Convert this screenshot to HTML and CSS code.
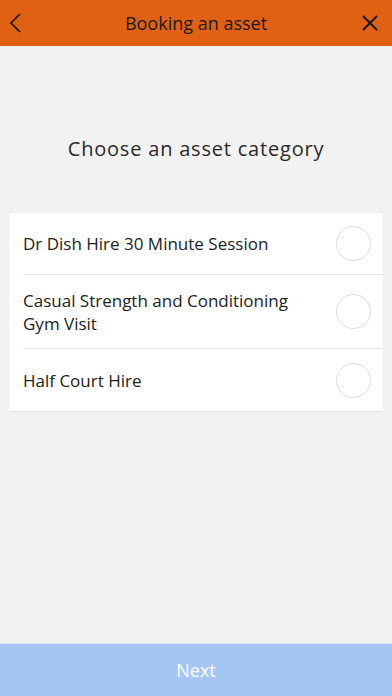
FILE: index.html
```html
<!DOCTYPE html>
<html lang="en">
<head>
    <meta charset="UTF-8">
    <meta name="viewport" content="width=device-width, initial-scale=1.0">
    <title>Booking an asset</title>
    <link rel="stylesheet" href="styles.css">
</head>
<body>
    <header class="top-bar">
        <span class="icon-btn">
            <svg width="14" height="22" viewBox="0 0 14 22"><path d="M11 2 L2 11 L11 20" fill="none" stroke="#1a1a1a" stroke-width="1.7"/></svg>
        </span>
        <h1>Booking an asset</h1>
        <span class="icon-btn">
            <svg width="16" height="16" viewBox="0 0 16 16"><path d="M1 1 L15 15 M15 1 L1 15" fill="none" stroke="#1a1a1a" stroke-width="2"/></svg>
        </span>
    </header>

    <main>
        <h2>Choose an asset category</h2>
        <ul class="category-list">
            <li class="category"><span>Dr Dish Hire 30 Minute Session</span><span class="radio"></span></li>
            <li class="category tall"><span>Casual Strength and Conditioning Gym Visit</span><span class="radio"></span></li>
            <li class="category"><span>Half Court Hire</span><span class="radio"></span></li>
        </ul>
    </main>

    <footer class="next-btn">Next</footer>
</body>
</html>
```

FILE: styles.css
```css
* {
    margin: 0;
    padding: 0;
    box-sizing: border-box;
}

body {
    font-family: 'Open Sans', 'Noto Sans', sans-serif;
    background: #f2f2f2;
    color: #222;
    height: 696px;
    display: flex;
    flex-direction: column;
}

/* Header */
.top-bar {
    height: 46px;
    background: #e06014;
    display: flex;
    align-items: center;
    justify-content: space-between;
    padding: 0 14px 0 8px;
}

.top-bar h1 {
    font-size: 18px;
    font-weight: 400;
    color: #1a1a1a;
    margin-left: 6px;
}

.icon-btn {
    width: 16px;
    display: flex;
    align-items: center;
    justify-content: center;
}

/* Content */
main {
    flex: 1;
    padding: 0 9px;
}

main h2 {
    text-align: center;
    font-size: 20px;
    font-weight: 400;
    letter-spacing: 0.8px;
    color: #2a2a2a;
    margin: 88px 0 49px;
    line-height: 30px;
}

.category-list {
    list-style: none;
    background: #fff;
    padding-left: 14px;
    box-shadow: 0 1px 1px rgba(0, 0, 0, 0.06);
}

.category {
    display: flex;
    align-items: center;
    justify-content: space-between;
    min-height: 62px;
    padding-right: 12px;
    border-bottom: 1.5px solid #e6e6e6;
    font-size: 17px;
    line-height: 23px;
    color: #222;
}

.category span:first-child {
    max-width: 290px;
}

.category.tall {
    min-height: 74px;
}

.category:last-child {
    border-bottom: none;
}

.radio {
    width: 35px;
    height: 35px;
    border-radius: 50%;
    border: 1px solid #dcdcdc;
    flex-shrink: 0;
}

/* Footer button */
.next-btn {
    height: 53px;
    background: #a4c6f0;
    border-top: 1px solid #d6e4f5;
    color: #fff;
    font-size: 18px;
    display: flex;
    align-items: center;
    justify-content: center;
}
```
